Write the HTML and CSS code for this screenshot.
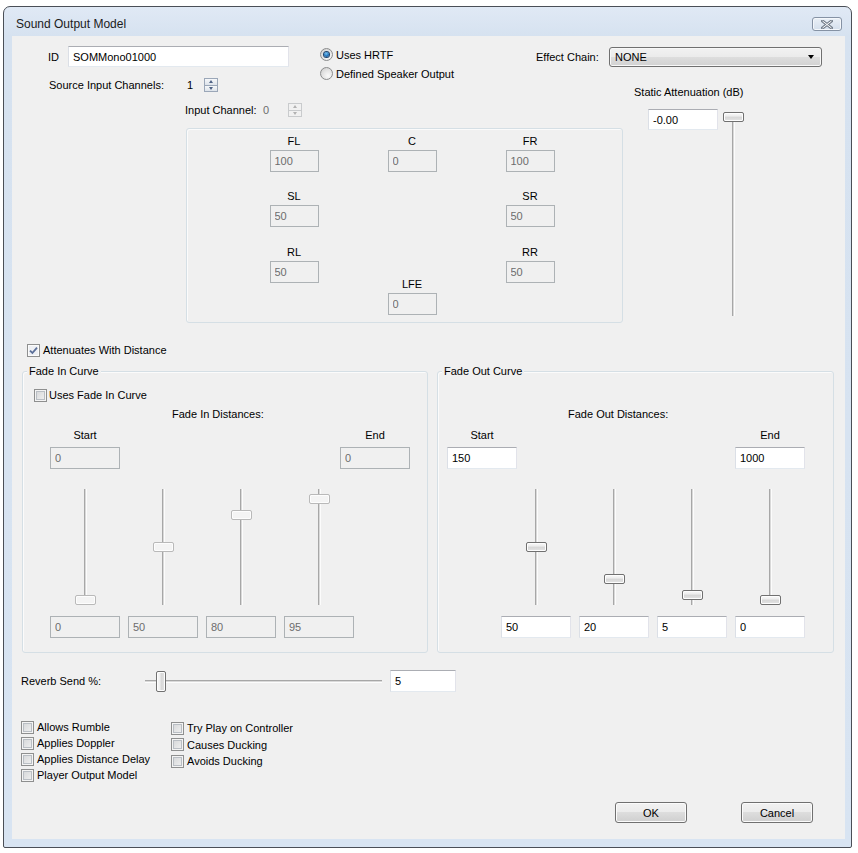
FILE: index.html
```html
<!DOCTYPE html>
<html>
<head>
<meta charset="utf-8">
<title>Sound Output Model</title>
<link rel="stylesheet" href="styles.css">
</head>
<body>
<div class="window">
  <div class="titlebar">
    <span class="title">Sound Output Model</span>
    <div class="close">
      <svg width="12" height="9" viewBox="0 0 12 9"><path d="M1.5 1 L10.5 8 M10.5 1 L1.5 8" stroke="#76808d" stroke-width="3" stroke-linecap="square" fill="none"/><path d="M1.5 1 L10.5 8 M10.5 1 L1.5 8" stroke="#fdfdfd" stroke-width="1" fill="none"/></svg>
    </div>
  </div>
  <div class="client">
    <div class="top">
      <div class="id-row">
        <span class="id-lbl">ID</span>
        <input class="tb id-tb" value="SOMMono01000">
      </div>
      <div class="radios">
        <div class="radio-row"><span class="radio on"></span><span>Uses HRTF</span></div>
        <div class="radio-row"><span class="radio"></span><span>Defined Speaker Output</span></div>
      </div>
      <div class="effect">
        <span class="effect-lbl">Effect Chain:</span>
        <div class="combo"><span>NONE</span><span class="arrow"></span></div>
      </div>
      <div class="source">
        <span class="source-lbl">Source Input Channels:</span>
        <span class="source-val">1</span>
        <span class="spin"><i><b class="up"></b></i><i><b class="down"></b></i></span>
      </div>
      <div class="inputch">
        <span class="inputch-lbl">Input Channel:</span>
        <span class="inputch-val">0</span>
        <span class="spin off"><i><b class="up"></b></i><i><b class="down"></b></i></span>
      </div>
      <div class="speakers">
        <div class="spk c1 r1"><span>FL</span><input class="tb spk-tb" value="100" disabled></div>
        <div class="spk c2 r1"><span>C</span><input class="tb spk-tb" value="0" disabled></div>
        <div class="spk c3 r1"><span>FR</span><input class="tb spk-tb" value="100" disabled></div>
        <div class="spk c1 r2"><span>SL</span><input class="tb spk-tb" value="50" disabled></div>
        <div class="spk c3 r2"><span>SR</span><input class="tb spk-tb" value="50" disabled></div>
        <div class="spk c1 r3"><span>RL</span><input class="tb spk-tb" value="50" disabled></div>
        <div class="spk c3 r3"><span>RR</span><input class="tb spk-tb" value="50" disabled></div>
        <div class="spk c2 r4"><span>LFE</span><input class="tb spk-tb" value="0" disabled></div>
      </div>
      <div class="atten">
        <div class="atten-lbl">Static Attenuation (dB)</div>
        <div class="atten-row">
          <input class="tb atten-tb" value="-0.00">
          <div class="vs tall">
            <span class="track"></span>
            <span class="thumb" style="top:0px"></span>
          </div>
        </div>
      </div>
    </div>

    <div class="att-row">
      <span class="cb checked"><svg width="11" height="11" viewBox="0 0 11 11"><path d="M2 5.6 L4.4 8 L9 2.6" stroke="#5b6f99" stroke-width="1.8" fill="none"/></svg></span>
      <span>Attenuates With Distance</span>
    </div>

    <div class="fades">
      <div class="group fade-in">
        <span class="legend">Fade In Curve</span>
        <div class="fi-cb"><span class="cb"></span><span>Uses Fade In Curve</span></div>
        <div class="gtitle fi-title">Fade In Distances:</div>
        <div class="dist fi-dist">
          <div class="dist-col"><span>Start</span><input class="tb dist-tb" value="0" disabled></div>
          <div class="dist-col"><span>End</span><input class="tb dist-tb" value="0" disabled></div>
        </div>
        <div class="sliders fi-sl">
          <div class="vs off"><span class="track"></span><span class="thumb" style="top:106px"></span></div>
          <div class="vs off"><span class="track"></span><span class="thumb" style="top:53px"></span></div>
          <div class="vs off"><span class="track"></span><span class="thumb" style="top:21px"></span></div>
          <div class="vs off"><span class="track"></span><span class="thumb" style="top:5px"></span></div>
        </div>
        <div class="vals fi-sl">
          <input class="tb dist-tb" value="0" disabled>
          <input class="tb dist-tb" value="50" disabled>
          <input class="tb dist-tb" value="80" disabled>
          <input class="tb dist-tb" value="95" disabled>
        </div>
      </div>
      <div class="group fade-out">
        <span class="legend">Fade Out Curve</span>
        <div class="gtitle fo-title">Fade Out Distances:</div>
        <div class="dist fo-dist">
          <div class="dist-col"><span>Start</span><input class="tb dist-tb" value="150"></div>
          <div class="dist-col"><span>End</span><input class="tb dist-tb" value="1000"></div>
        </div>
        <div class="sliders fo-sl">
          <div class="vs"><span class="track"></span><span class="thumb" style="top:53px"></span></div>
          <div class="vs"><span class="track"></span><span class="thumb" style="top:85px"></span></div>
          <div class="vs"><span class="track"></span><span class="thumb" style="top:101px"></span></div>
          <div class="vs"><span class="track"></span><span class="thumb" style="top:106px"></span></div>
        </div>
        <div class="vals fo-sl">
          <input class="tb dist-tb" value="50">
          <input class="tb dist-tb" value="20">
          <input class="tb dist-tb" value="5">
          <input class="tb dist-tb" value="0">
        </div>
      </div>
    </div>

    <div class="reverb">
      <span class="reverb-lbl">Reverb Send %:</span>
      <div class="hs">
        <span class="htrack"></span>
        <span class="hthumb" style="left:11px"></span>
      </div>
      <input class="tb rv-tb" value="5">
    </div>

    <div class="flags">
      <div class="flag-col">
        <div class="flag"><span class="cb"></span><span>Allows Rumble</span></div>
        <div class="flag"><span class="cb"></span><span>Applies Doppler</span></div>
        <div class="flag"><span class="cb"></span><span>Applies Distance Delay</span></div>
        <div class="flag"><span class="cb"></span><span>Player Output Model</span></div>
      </div>
      <div class="flag-col c2">
        <div class="flag"><span class="cb"></span><span>Try Play on Controller</span></div>
        <div class="flag"><span class="cb"></span><span>Causes Ducking</span></div>
        <div class="flag"><span class="cb"></span><span>Avoids Ducking</span></div>
      </div>
    </div>

    <div class="buttons">
      <button class="btn">OK</button>
      <button class="btn">Cancel</button>
    </div>
  </div>
</div>
</body>
</html>
```
FILE: styles.css
```css
* { box-sizing: border-box; }
html, body { margin: 0; padding: 0; background: #ffffff; }
body {
  font-family: "Liberation Sans", Arial, sans-serif;
  font-size: 11px;
  color: #000;
}
input, button { font: inherit; margin: 0; }

.window {
  margin: 6px 0 0 3px;
  width: 849px;
  height: 842px;
  border: 1px solid #4a4f57;
  border-radius: 7px 7px 2px 2px;
  background: linear-gradient(#e0e9f5 0, #d6e2f0 29px, #d8e4f2 100%);
  padding: 0 6px 8px 8px;
  display: flex;
  flex-direction: column;
}
.titlebar {
  flex: none;
  height: 29px;
  padding: 5px 3px 0 4px;
  display: flex;
  align-items: center;
  justify-content: space-between;
}
.title { font-size: 12px; color: #1b1b1b; }
.close {
  width: 30px;
  height: 14px;
  border: 1px solid #8592a4;
  border-radius: 3px;
  background: linear-gradient(#eaf0f7, #d4dfec);
  box-shadow: inset 0 0 0 1px #f4f7fb;
  display: flex;
  align-items: center;
  justify-content: center;
}
.close svg { display: block; }

.client {
  flex: none;
  width: 833px;
  height: 803px;
  background: #f0f0f0;
}

/* text boxes */
.tb {
  height: 22px;
  padding: 0 4px;
  background: #fff;
  border: 1px solid;
  border-color: #abadb3 #e2e3ea #e3e9ef #dbdfe6;
  color: #000;
  outline: none;
}
.tb:disabled {
  background: #f0f0f0;
  border-color: #adb2b5;
  color: #6d6d6d;
  -webkit-text-fill-color: #6d6d6d;
}

/* top area */
.top {
  display: grid;
  grid-template-columns: 173px 123px 228px 87px 222px;
  grid-template-rows: 40px 20px 26px auto;
}
.id-row {
  grid-column: 1 / 3;
  grid-row: 1;
  align-self: start;
  margin-top: 10px;
  padding-left: 36px;
  display: flex;
  align-items: center;
}
.id-lbl { width: 20px; }
.id-tb { width: 221px; height: 21px; }

.radios {
  grid-column: 3;
  grid-row: 1 / 3;
  padding: 9px 0 0 12px;
}
.radio-row {
  height: 19px;
  display: flex;
  align-items: center;
  gap: 3px;
}
.radio {
  width: 13px;
  height: 13px;
  border-radius: 50%;
  border: 1px solid #8b8c8d;
  background: radial-gradient(circle at 65% 70%, #fafafa 0, #e2e2e2 55%, #c8c8c8 100%);
  display: flex;
  align-items: center;
  justify-content: center;
}
.radio.on::after {
  content: "";
  width: 5px;
  height: 5px;
  border-radius: 50%;
  background: radial-gradient(circle at 45% 35%, #7fc6f0 0, #2377c0 50%, #0f3c70 100%);
  box-shadow: 0 0 0 1px #20456e;
}

.effect {
  grid-column: 4 / 6;
  grid-row: 1;
  align-self: start;
  margin-top: 11px;
  display: flex;
  align-items: center;
}
.effect-lbl { width: 73px; }
.combo {
  width: 213px;
  height: 20px;
  border: 1px solid #707070;
  border-radius: 3px;
  background: linear-gradient(#f2f2f2 0, #ebebeb 50%, #dddddd 51%, #d2d2d2 100%);
  box-shadow: inset 0 0 0 1px #f8f8f8;
  padding: 0 7px 0 5px;
  display: flex;
  align-items: center;
  justify-content: space-between;
}
.arrow {
  width: 0;
  height: 0;
  border-top: 4px solid #000;
  border-left: 3.5px solid transparent;
  border-right: 3.5px solid transparent;
}

.source {
  grid-column: 1 / 3;
  grid-row: 2;
  height: 18px;
  padding-left: 37px;
  display: flex;
  align-items: center;
}
.source-lbl { width: 138px; }
.source-val { width: 17px; }

.spin {
  width: 14px;
  height: 14px;
  display: flex;
  flex-direction: column;
}
.spin i {
  flex: 1;
  display: flex;
  align-items: center;
  justify-content: center;
  border: 1px solid #9ba7b8;
  background: linear-gradient(#f6f8fa, #dde3ea);
}
.spin i + i { border-top: none; }
.spin b { width: 0; height: 0; border-left: 2.5px solid transparent; border-right: 2.5px solid transparent; }
.spin b.up { border-bottom: 3px solid #4d6185; }
.spin b.down { border-top: 3px solid #4d6185; }
.spin.off i { border-color: #c9cbcd; background: #f1f1f1; }
.spin.off b.up { border-bottom-color: #b2b2b2; }
.spin.off b.down { border-top-color: #b2b2b2; }

.inputch {
  grid-column: 2 / 4;
  grid-row: 3;
  align-self: start;
  margin-top: 7px;
  height: 14px;
  display: flex;
  align-items: center;
}
.inputch-lbl { width: 78px; }
.inputch-val { width: 25px; color: #6d6d6d; }

.speakers {
  grid-column: 2 / 5;
  grid-row: 4;
  margin: 6px 0 0 1px;
  width: 437px;
  height: 195px;
  border: 1px solid #d5dfe5;
  border-radius: 3px;
  box-shadow: inset 1px 1px 0 #fbfbfb;
  padding: 5px 0 0 48px;
  display: grid;
  grid-template-columns: repeat(3, 118px);
  grid-template-rows: 55px 56px 32px auto;
}
.spk {
  display: flex;
  flex-direction: column;
  align-items: center;
  align-self: start;
}
.spk span { line-height: 14px; }
.spk-tb { width: 49px; height: 22px; margin-top: 2px; }
.c1 { grid-column: 1; }
.c2 { grid-column: 2; }
.c3 { grid-column: 3; }
.r1 { grid-row: 1; }
.r2 { grid-row: 2; }
.r3 { grid-row: 3 / 5; }
.r4 { grid-row: 4; }

.atten {
  grid-column: 5;
  grid-row: 2 / 5;
  padding: 9px 0 0 11px;
}
.atten-lbl { line-height: 14px; }
.atten-row {
  margin: 10px 0 0 14px;
  display: flex;
  align-items: flex-start;
  gap: 5px;
}
.atten-tb { width: 70px; height: 21px; }

/* vertical sliders */
.vs {
  position: relative;
  width: 70px;
  height: 116px;
  display: flex;
  justify-content: center;
}
.vs.tall { width: 21px; height: 204px; margin-top: 3px; }
.track {
  width: 3px;
  height: 100%;
  border-left: 1px solid #a7a7a7;
  border-right: 1px solid #fcfcfc;
  background: #d9d9d9;
}
.thumb {
  position: absolute;
  left: 25px;
  width: 21px;
  height: 10px;
  border: 1px solid #707070;
  border-radius: 2px;
  background: linear-gradient(#fafafa 0, #eeeeee 35%, #d8d8d8 55%, #e4e4e4 100%);
  box-shadow: inset 0 0 0 1px #fdfdfd;
}
.vs.tall .thumb { left: 0; }
.vs.off .thumb {
  border-color: #b9b9b9;
  background: #f4f4f4;
}

/* attenuates row */
.att-row {
  margin: 19px 0 0 15px;
  height: 16px;
  display: flex;
  align-items: center;
  gap: 3px;
}
.cb {
  flex: none;
  width: 13px;
  height: 13px;
  border: 1px solid #8e8f8f;
  background: linear-gradient(135deg, #d2d4d6 0, #f3f3f3 100%);
  box-shadow: inset 0 0 0 1px #f4f4f4, inset 0 0 0 2px #b9bec4;
  display: flex;
  align-items: center;
  justify-content: center;
}
.cb.checked { background: #eef0f4; box-shadow: inset 0 0 0 1px #fbfbfb; }
.cb svg { display: block; }

/* fade groups */
.fades {
  margin: 13px 0 0 10px;
  display: flex;
  gap: 9px;
}
.group {
  position: relative;
  height: 282px;
  border: 1px solid #d5dfe5;
  border-radius: 3px;
  box-shadow: inset 1px 1px 0 #fbfbfb;
}
.fade-in { width: 406px; }
.fade-out { width: 397px; }
.legend {
  position: absolute;
  top: -8px;
  left: 4px;
  padding: 0 2px;
  line-height: 14px;
  background: #f0f0f0;
}
.fi-cb {
  margin: 16px 0 0 11px;
  height: 14px;
  display: flex;
  align-items: center;
  gap: 2px;
}
.gtitle { line-height: 14px; }
.fi-title { margin-top: 5px; padding-left: 149px; }
.fo-title { margin-top: 35px; padding-left: 130px; }
.dist {
  margin-top: 7px;
  display: flex;
  justify-content: space-between;
}
.fi-dist { margin-left: 27px; width: 360px; }
.fo-dist { margin-left: 9px; width: 358px; }
.dist-col {
  width: 70px;
  display: flex;
  flex-direction: column;
  align-items: center;
}
.dist-col span { line-height: 14px; }
.dist-col .tb { margin-top: 5px; }
.dist-tb { width: 70px; height: 22px; }
.sliders, .vals {
  display: grid;
  grid-template-columns: repeat(4, 70px);
  column-gap: 8px;
}
.sliders { margin-top: 20px; }
.vals { margin-top: 11px; }
.fi-sl { margin-left: 27px; }
.fo-sl { margin-left: 63px; }

/* reverb */
.reverb {
  margin: 17px 0 0 9px;
  height: 22px;
  display: flex;
  align-items: center;
}
.reverb-lbl { width: 124px; }
.hs {
  position: relative;
  width: 237px;
  height: 22px;
  display: flex;
  align-items: center;
}
.htrack {
  width: 100%;
  height: 3px;
  border-top: 1px solid #a7a7a7;
  border-bottom: 1px solid #fcfcfc;
  background: #d9d9d9;
}
.hthumb {
  position: absolute;
  top: 1px;
  width: 10px;
  height: 21px;
  border: 1px solid #707070;
  border-radius: 2px;
  background: linear-gradient(90deg, #fafafa 0, #eeeeee 35%, #d8d8d8 55%, #e4e4e4 100%);
  box-shadow: inset 0 0 0 1px #fdfdfd;
}
.rv-tb { margin-left: 8px; width: 66px; height: 22px; }

/* flags */
.flags {
  margin: 27px 0 0 9px;
  display: flex;
}
.flag-col {
  width: 150px;
  display: flex;
  flex-direction: column;
}
.flag-col.c2 { margin-top: 1px; }
.flag {
  height: 16px;
  display: flex;
  align-items: center;
  gap: 3px;
}
.flag-col.c2 .flag { height: 16.5px; }

/* buttons */
.buttons {
  margin-top: 19px;
  padding-right: 32px;
  display: flex;
  justify-content: flex-end;
  gap: 54px;
}
.btn {
  width: 72px;
  height: 21px;
  padding: 0;
  border: 1px solid #707070;
  border-radius: 3px;
  background: linear-gradient(#f2f2f2 0, #ebebeb 49%, #dddddd 50%, #cfcfcf 100%);
  box-shadow: inset 0 0 0 1px #fbfbfb;
  color: #000;
}
```
